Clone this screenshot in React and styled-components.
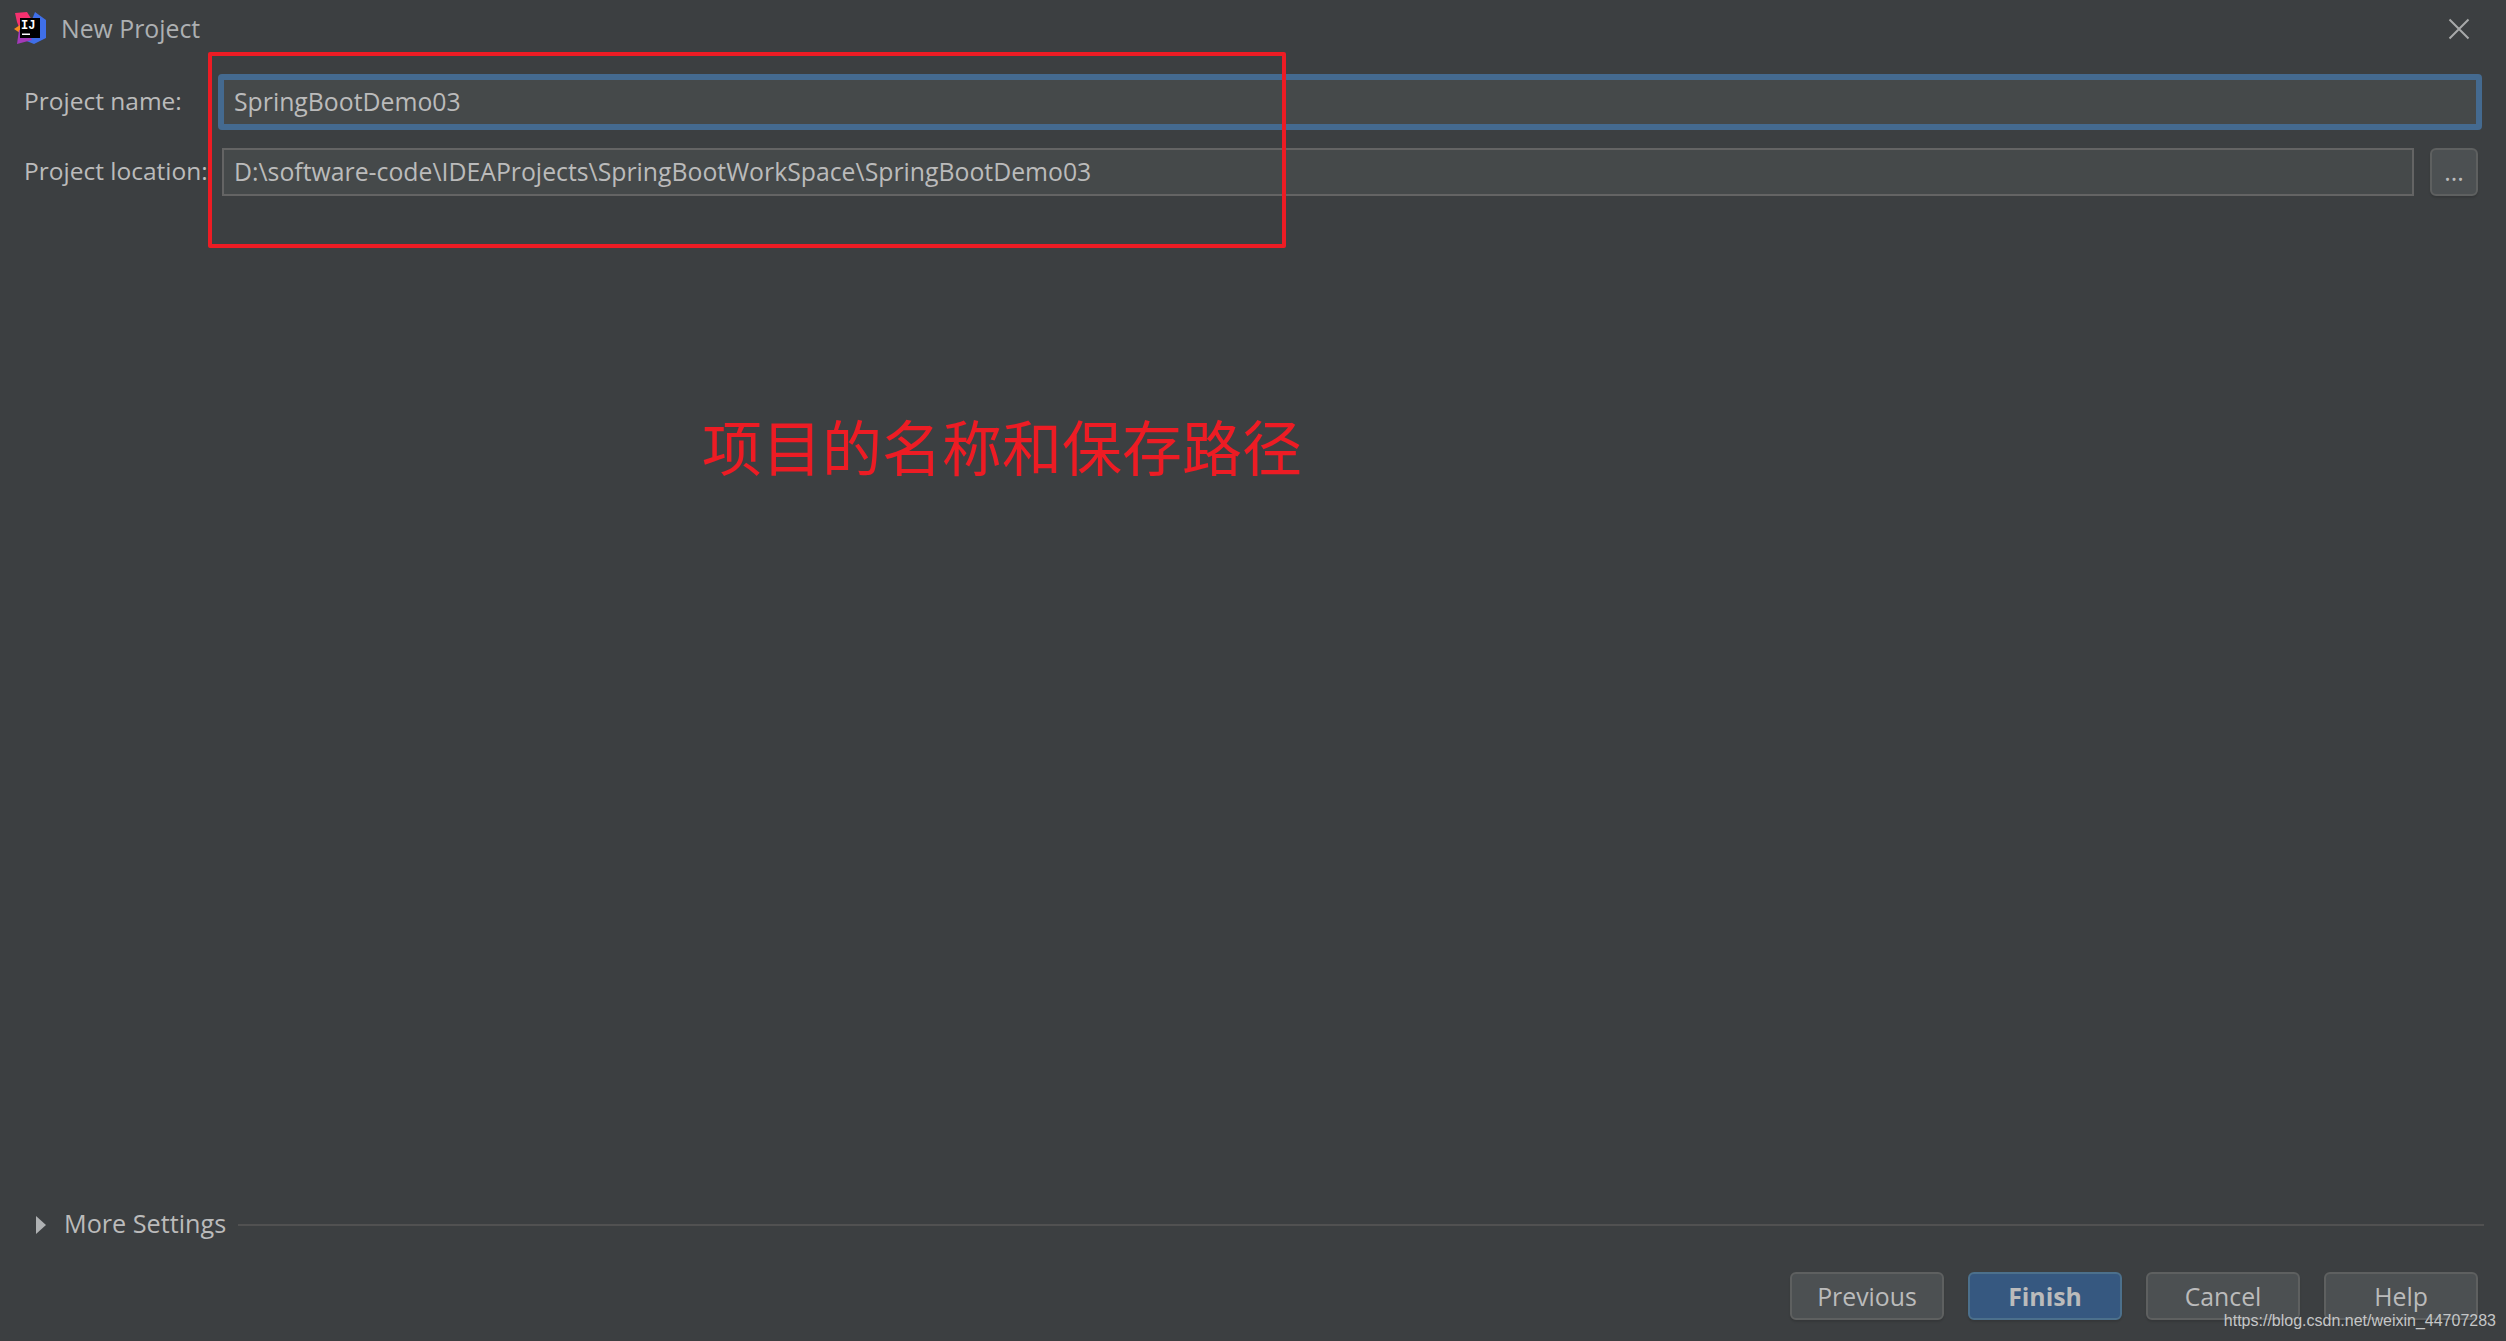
import React from 'react';
import styled, { createGlobalStyle } from 'styled-components';

const GlobalStyle = createGlobalStyle`
  html, body {
    margin: 0;
    padding: 0;
    background: #3c3f41;
  }
`;

const Dialog = styled.div`
  position: relative;
  display: flex;
  flex-direction: column;
  width: 2506px;
  height: 1341px;
  overflow: hidden;
  background: #3c3f41;
  color: #bbbbbb;
  font-family: "Open Sans", "Noto Sans", sans-serif;
  font-size: 24.8px;
`;

const TitleBar = styled.div`
  display: flex;
  align-items: center;
  height: 58px;
  padding: 0 36px 0 14px;
  flex-shrink: 0;
`;

const Title = styled.span`
  margin-left: 13px;
  padding-bottom: 3px;
  flex: 1;
  color: #adb0b2;
`;

const CloseButton = styled.svg`
  width: 22px;
  height: 22px;
`;

const Form = styled.div`
  display: flex;
  flex-direction: column;
  gap: 18px;
  padding: 16px 24px 0 24px;
`;

const Row = styled.div`
  display: flex;
  align-items: center;
`;

const Label = styled.label`
  flex: 0 0 ${p => p.$width}px;
  padding-bottom: 4px;
  font-size: 24.5px;
  white-space: nowrap;
`;

const Input = styled.div`
  box-sizing: border-box;
  flex: 1;
  display: flex;
  align-items: center;
  background: #45494a;
  white-space: nowrap;
  padding-bottom: 3px;
  ${p => p.$focused ? `
    height: 56px;
    padding-left: 10px;
    border: 6px solid #446a90;
    border-radius: 4px;
  ` : `
    height: 48px;
    padding-left: 10px;
    border: 2px solid #646464;
  `}
`;

const BrowseButton = styled.button`
  box-sizing: border-box;
  flex: 0 0 48px;
  height: 48px;
  margin: 0 4px 0 16px;
  padding: 0 0 2px;
  background: #4c5052;
  border: 2px solid #5e6060;
  border-radius: 6px;
  box-shadow: 0 2px 2px rgba(0, 0, 0, 0.12);
  color: #bbbbbb;
  font: inherit;
  line-height: 1;
`;

const Spacer = styled.div`
  flex: 1;
`;

const MoreRow = styled.div`
  display: flex;
  align-items: center;
  height: 40px;
  padding: 0 22px 0 36px;
`;

const Caret = styled.span`
  width: 0;
  height: 0;
  border-top: 9px solid transparent;
  border-bottom: 9px solid transparent;
  border-left: 10px solid #afb1b3;
`;

const MoreLabel = styled.span`
  margin-left: 18px;
  padding-bottom: 5px;
  font-size: 25.2px;
  white-space: nowrap;
`;

const Divider = styled.div`
  flex: 1;
  height: 2px;
  margin-left: 12px;
  background: #515151;
`;

const Footer = styled.div`
  display: flex;
  justify-content: flex-end;
  gap: 24px;
  margin-top: 27px;
  padding: 0 28px 21px 0;
`;

const Button = styled.button`
  box-sizing: border-box;
  width: 154px;
  height: 48px;
  padding: 0;
  background: ${p => (p.$primary ? '#365880' : '#4c5052')};
  border: 2px solid ${p => (p.$primary ? '#4c708c' : '#5e6060')};
  border-radius: 6px;
  box-shadow: 0 2px 2px rgba(0, 0, 0, 0.12);
  color: #bbbbbb;
  font: inherit;
  font-weight: ${p => (p.$primary ? 700 : 400)};
`;

// red annotation drawn over the dialog
const Marker = styled.div`
  position: absolute;
  box-sizing: border-box;
  left: 208px;
  top: 52px;
  width: 1078px;
  height: 196px;
  border: 4px solid #ed1c24;
  border-radius: 2px;
`;

const Note = styled.div`
  position: absolute;
  left: 702px;
  top: 403px;
  color: #ed1c24;
  font-family: "Noto Sans CJK SC", sans-serif;
  font-size: 60px;
  line-height: 84px;
  white-space: nowrap;
`;

const Watermark = styled.div`
  position: absolute;
  right: 10px;
  top: 1310px;
  color: #c4c6c7;
  font-family: "Liberation Sans", sans-serif;
  font-size: 16px;
  line-height: 22px;
  white-space: nowrap;
`;

const Logo = () => (
  <svg width="34" height="34" viewBox="0 0 34 34">
    <polygon points="1,1 13,0 18,8 6,18 3,10" fill="#f5316f" />
    <polygon points="21,0 32,8 32,26 20,32 10,28" fill="#3f6fe8" />
    <polygon points="0,17 6,13 6,21" fill="#f58a1f" />
    <polygon points="3,32 18,28 14,20 5,18" fill="#a43ab8" />
    <rect x="6" y="6" width="20" height="20" fill="#000" />
    <text x="7" y="17" fill="#fff" fontFamily="Liberation Mono, monospace" fontWeight="700" fontSize="12">IJ</text>
    <rect x="8" y="21.5" width="8" height="1.5" fill="#fff" />
  </svg>
);

const App = () => (
  <Dialog>
    <GlobalStyle />
    <TitleBar>
      <Logo />
      <Title>New Project</Title>
      <CloseButton viewBox="0 0 22 22">
        <path d="M1.5 1.5 L20.5 20.5 M20.5 1.5 L1.5 20.5" stroke="#a8a9aa" strokeWidth="2" fill="none" />
      </CloseButton>
    </TitleBar>
    <Form>
      <Row>
        <Label $width={194}>Project name:</Label>
        <Input $focused>SpringBootDemo03</Input>
      </Row>
      <Row>
        <Label $width={198}>Project location:</Label>
        <Input>D:\software-code\IDEAProjects\SpringBootWorkSpace\SpringBootDemo03</Input>
        <BrowseButton>...</BrowseButton>
      </Row>
    </Form>
    <Spacer />
    <MoreRow>
      <Caret />
      <MoreLabel>More Settings</MoreLabel>
      <Divider />
    </MoreRow>
    <Footer>
      <Button>Previous</Button>
      <Button $primary>Finish</Button>
      <Button>Cancel</Button>
      <Button>Help</Button>
    </Footer>
    <Marker />
    <Note>项目的名称和保存路径</Note>
    <Watermark>https://blog.csdn.net/weixin_44707283</Watermark>
  </Dialog>
);

export default App;
